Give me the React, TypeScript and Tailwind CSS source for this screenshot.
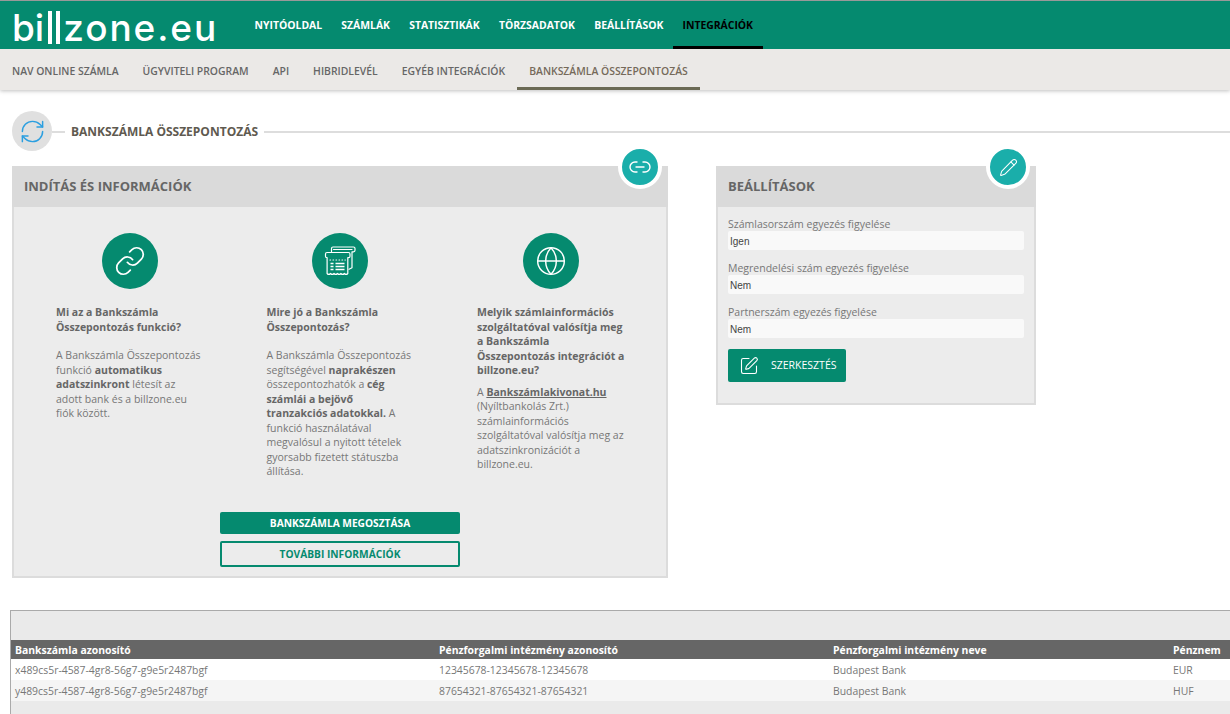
import { Globe, Link, Link2, Pencil, RefreshCw, SquarePen } from 'lucide-react';

const mainMenu = ['NYITÓOLDAL', 'SZÁMLÁK', 'STATISZTIKÁK', 'TÖRZSADATOK', 'BEÁLLÍTÁSOK'];
const subMenu = ['NAV ONLINE SZÁMLA', 'ÜGYVITELI PROGRAM', 'API', 'HIBRIDLEVÉL', 'EGYÉB INTEGRÁCIÓK'];

const settings = [
  { label: 'Számlasorszám egyezés figyelése', value: 'Igen' },
  { label: 'Megrendelési szám egyezés figyelése', value: 'Nem' },
  { label: 'Partnerszám egyezés figyelése', value: 'Nem' },
];

const rows = [
  { id: 'x489cs5r-4587-4gr8-56g7-g9e5r2487bgf', giro: '12345678-12345678-12345678', bank: 'Budapest Bank', cur: 'EUR' },
  { id: 'y489cs5r-4587-4gr8-56g7-g9e5r2487bgf', giro: '87654321-87654321-87654321', bank: 'Budapest Bank', cur: 'HUF' },
];

const ReceiptIcon = () => (
  <svg viewBox="0 0 32 32" className="w-[32px] h-[32px]" fill="none" stroke="white" strokeWidth="1.2" strokeLinejoin="round" strokeLinecap="round">
    {/* back sheet */}
    <path d="M7.500 6.500V3.500c0-.9.6-1.500 1.500-1.500h20.500c.9 0 1.500.6 1.500 1.500v1.800c0 .9-.6 1.500-1.500 1.500h-1.500v16l-3 1.500" />
    <path d="M9.500 4.500h18.500" />
    {/* front sheet */}
    <path d="M3 7.500h21.500c.9 0 1.500.6 1.500 1.500v2.200c0 .9-.6 1.500-1.500 1.500h-.7v15.800c-1.150 1.300-2.300 1.300-3.450 0-1.150 1.300-2.300 1.300-3.450 0-1.150 1.300-2.300 1.300-3.450 0-1.150 1.300-2.300 1.300-3.450 0-1.150 1.300-2.300 1.300-3.450 0-1.150 1.300-2.300 1.300-3.450 0V12.700H3c-.9 0-1.500-.6-1.500-1.500V9c0-.9.6-1.500 1.500-1.500z" />
    <path d="M6 15h.6M9 15h.6M12 15h.6M15 15h.6M18 15h.6M21 15h.3" />
    <path d="M11.500 18.500h9M11.500 21.500h9M11.500 24.500h9" strokeWidth="1.700" strokeLinecap="butt" />
    <path d="M6.500 18.500h3M6.500 21.500h3M6.500 24.500h3" strokeWidth="1.700" strokeLinecap="butt" />
  </svg>
);

const IconCircle = ({ children }: { children: React.ReactNode }) => (
  <div className="w-[56px] h-[56px] rounded-full bg-[#058a6f] flex items-center justify-center ml-[45.5px]">{children}</div>
);

const App = () => {
  return (
    <div className="h-[714px] overflow-hidden bg-white text-[#666] font-['Open_Sans',sans-serif]">
      {/* main nav */}
      <header className="h-[49px] bg-[#058a6f] border-t border-[#999] flex relative z-10">
        <div className="w-[245px] pl-[12px] pt-[10px] flex items-start text-white font-['Inter',sans-serif] font-medium text-[37px] leading-[34px] shrink-0">
          <span>bi</span>
          <span className="w-[4px] h-[33px] bg-white ml-[4px]" />
          <span className="w-[4px] h-[33px] bg-white ml-[4px]" />
          <span className="ml-[3px] tracking-[1.900px]">zone.eu</span>
        </div>
        <nav className="flex text-[10.4px] font-bold text-white">
          {mainMenu.map((m) => (
            <a key={m} className="px-[9.6px] pt-[16px] leading-[16px]">{m}</a>
          ))}
          <a className="px-[9.5px] pt-[16px] leading-[16px] text-black border-b-[3px] border-black">INTEGRÁCIÓK</a>
        </nav>
      </header>

      {/* sub nav */}
      <div className="h-[41px] bg-[#ebe9e7] flex text-[10.4px] font-semibold shadow-[0_1px_4px_rgba(0,0,0,0.25)] relative">
        {subMenu.map((m) => (
          <a key={m} className="px-3 pt-[14px] leading-[16px]">{m}</a>
        ))}
        <a className="px-3 pt-[14px] leading-[16px] text-[#75695a] border-b-[3px] border-[#6b6a55]">BANKSZÁMLA ÖSSZEPONTOZÁS</a>
      </div>

      {/* page title */}
      <div className="flex items-center pl-3 mt-[21px] h-[40px]">
        <div className="w-[40px] h-[40px] rounded-full bg-[#e0e0e0] flex items-center justify-center shrink-0">
          <RefreshCw className="w-[27px] h-[27px] text-[#2b9fe0]" strokeWidth={1.3} />
        </div>
        <div className="w-[13px] h-[2px] mt-[2px] bg-[#ddd]" />
        <h1 className="mx-[6px] mt-[2px] text-[12px] font-bold text-[#5f5a50] whitespace-nowrap">BANKSZÁMLA ÖSSZEPONTOZÁS</h1>
        <div className="flex-1 h-[2px] mt-[2px] bg-[#ddd]" />
      </div>

      <div className="flex items-start pl-3 mt-[15px] gap-[48px]">
        {/* info card */}
        <section className="w-[656px] h-[412px] bg-[#ececec] border-2 border-t-0 border-[#dcdcdc] relative shrink-0">
          <h2 className="h-[41px] -mx-[2px] bg-[#dadada] pl-3 text-[13px] font-bold leading-[41px]">INDÍTÁS ÉS INFORMÁCIÓK</h2>
          <div className="absolute -top-[21px] right-[4px] w-[44px] h-[44px] rounded-full bg-[#1aaeaa] border-4 border-white flex items-center justify-center">
            <Link2 className="w-[24px] h-[24px] text-white" strokeWidth={1.4} />
          </div>

          <div className="grid grid-cols-[210.5px_210.5px_220px] pl-[10px] pt-[26px] text-[10.5px] leading-[14.5px] text-[#777]">
            <div className="pl-8 pr-8">
              <IconCircle><Link className="w-[32px] h-[32px] text-white" strokeWidth={1.3} /></IconCircle>
              <p className="mt-[16px] font-bold text-[#666]">Mi az a Bankszámla Összepontozás funkció?</p>
              <p className="mt-[14px]">
                A Bankszámla Összepontozás funkció <b className="text-[#666]">automatikus adatszinkront</b> létesít az adott bank és a billzone.eu fiók között.
              </p>
            </div>
            <div className="pl-8 pr-8">
              <IconCircle><ReceiptIcon /></IconCircle>
              <p className="mt-[16px] font-bold text-[#666]">Mire jó a Bankszámla Összepontozás?</p>
              <p className="mt-[14px]">
                A Bankszámla Összepontozás segítségével <b className="text-[#666]">naprakészen</b> összepontozhatók a <b className="text-[#666]">cég számlái a bejövő tranzakciós adatokkal.</b> A funkció használatával megvalósul a nyitott tételek gyorsabb fizetett státuszba állítása.
              </p>
            </div>
            <div className="pl-8 pr-[36px]">
              <IconCircle><Globe className="w-[32px] h-[32px] text-white" strokeWidth={1.1} /></IconCircle>
              <p className="mt-[16px] font-bold text-[#666]">Melyik számlainformációs szolgáltatóval valósítja meg a Bankszámla Összepontozás integrációt a billzone.eu?</p>
              <p className="mt-[7px]">
                A <b className="underline text-[#666]">Bankszámlakivonat.hu</b> (Nyíltbankolás Zrt.) számlainformációs szolgáltatóval valósítja meg az adatszinkronizációt a billzone.eu.
              </p>
            </div>
          </div>

          <div className="absolute left-[206px] top-[346px] w-[240px] flex flex-col gap-[7px] text-[10.2px] font-bold text-center">
            <button className="h-[22px] pt-[1px] rounded-[2px] bg-[#058a6f] text-white">BANKSZÁMLA MEGOSZTÁSA</button>
            <button className="h-[26px] pt-[1px] rounded-[2px] border-2 border-[#058a6f] text-[#058a6f]">TOVÁBBI INFORMÁCIÓK</button>
          </div>
        </section>

        {/* settings card */}
        <section className="w-[320px] h-[239px] bg-[#ececec] border-2 border-t-0 border-[#dcdcdc] relative shrink-0">
          <h2 className="h-[41px] -mx-[2px] bg-[#dadada] pl-3 text-[13px] font-bold leading-[41px]">BEÁLLÍTÁSOK</h2>
          <div className="absolute -top-[21px] right-[4px] w-[44px] h-[44px] rounded-full bg-[#1aaeaa] border-4 border-white flex items-center justify-center">
            <Pencil className="w-[19px] h-[19px] text-white" strokeWidth={1.3} />
          </div>
          <div className="px-[10px] pt-[9px] text-[10.5px] text-[#777]">
            {settings.map((s) => (
              <div key={s.label} className="mb-[10px]">
                <label className="block leading-[14px] pt-[1px]">{s.label}</label>
                <div className="h-[19px] rounded-[2px] bg-[#f9f9f9] pl-[2px] font-['Liberation_Sans',sans-serif] text-[10px] leading-[21px] text-[#444]">{s.value}</div>
              </div>
            ))}
            <button className="mt-[11px] w-[118px] h-[33px] rounded-[2px] bg-[#058a6f] text-white flex items-center pl-[11px] gap-[12px] text-[10.5px] font-normal">
              <SquarePen className="w-[20px] h-[20px]" strokeWidth={1.3} />
              SZERKESZTÉS
            </button>
          </div>
        </section>
      </div>

      {/* accounts table */}
      <div className="ml-[10px] mt-[32px] h-[110px] bg-[#eaeaea] border-l border-t border-[#aaa] pt-[29px] text-[10.4px]">
        <div className="grid grid-cols-[424px_394px_340px_1fr] h-[19px] bg-[#666] text-white font-bold leading-[20px] pl-[4px]">
          <div>Bankszámla azonosító</div>
          <div>Pénzforgalmi intézmény azonosító</div>
          <div>Pénzforgalmi intézmény neve</div>
          <div>Pénznem</div>
        </div>
        {rows.map((r, i) => (
          <div key={r.id} className={`grid grid-cols-[424px_394px_340px_1fr] h-[21px] leading-[22px] pl-[4px] text-[#777] ${i === 0 ? 'bg-white' : 'bg-[#f5f5f5]'}`}>
            <div>{r.id}</div>
            <div>{r.giro}</div>
            <div>{r.bank}</div>
            <div>{r.cur}</div>
          </div>
        ))}
      </div>
    </div>
  );
};

export default App;
